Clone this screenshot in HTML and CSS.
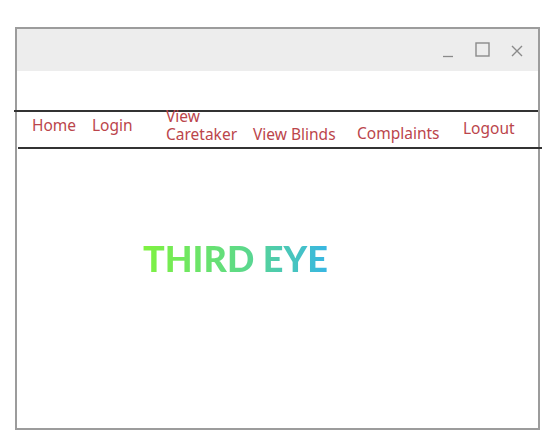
FILE: index.html
```html
<!DOCTYPE html>
<html>
<head>
<meta charset="utf-8">
<link rel="stylesheet" href="styles.css">
</head>
<body>
<div class="window">
  <div class="titlebar">
    <svg class="ctl" width="12" height="14" viewBox="0 0 12 14"><path d="M1 12.5H11" stroke="#8a8a8a" stroke-width="1.3"/></svg>
    <svg class="ctl" width="15" height="15" viewBox="0 0 15 15"><rect x="1" y="1" width="13" height="13" fill="none" stroke="#8a8a8a" stroke-width="1.4"/></svg>
    <svg class="ctl" width="12" height="12" viewBox="0 0 12 12"><path d="M1 1L11 11M11 1L1 11" stroke="#8a8a8a" stroke-width="1.4"/></svg>
  </div>
  <div class="spacer"></div>
  <div class="rule rule-top"></div>
  <nav class="nav">
    <a class="item home">Home</a>
    <a class="item login">Login</a>
    <a class="item caretaker">View<br>Caretaker</a>
    <a class="item blinds">View Blinds</a>
    <a class="item complaints">Complaints</a>
    <a class="item logout">Logout</a>
  </nav>
  <div class="rule rule-bottom"></div>
  <div class="hero"><span class="brand">THIRD EYE</span></div>
</div>
</body>
</html>
```
FILE: styles.css
```css
html, body { margin: 0; padding: 0; background: #fff; }
body { font-family: "Noto Sans", sans-serif; }
.window {
  box-sizing: border-box;
  margin: 27px 0 0 15px;
  width: 525px;
  height: 403px;
  border: 2px solid #9c9c9c;
  background: #fff;
}
.titlebar {
  height: 42px;
  background: #ededed;
  display: flex;
  justify-content: flex-end;
  align-items: center;
  padding-right: 15px;
}
.ctl { display: block; }
.titlebar .ctl:nth-child(1) { margin-right: 21px; margin-top: 2px; }
.titlebar .ctl:nth-child(2) { margin-right: 21px; margin-top: -1px; }
.titlebar .ctl:nth-child(3) { margin-top: 1px; }
.spacer { height: 39px; }
.rule { height: 2px; background: #333; width: 524px; }
.rule-top { margin-left: -3px; }
.rule-bottom { margin-left: 1px; }
.nav {
  height: 35px;
  display: flex;
  align-items: flex-end;
  padding-left: 15px;
}
.item {
  display: block;
  color: #bb454b;
  font-size: 15.5px;
  line-height: 18px;
  flex: none;
}
.home { width: 60px; padding-bottom: 13px; }
.login { width: 74px; padding-bottom: 13px; }
.caretaker { width: 87px; padding-bottom: 4px; }
.blinds { width: 104px; padding-bottom: 4px; }
.complaints { width: 106px; padding-bottom: 5px; }
.logout { padding-bottom: 10px; }
.hero { padding: 90px 0 0 126px; }
.brand {
  display: inline-block;
  font-family: Lato, sans-serif;
  font-weight: 900;
  font-size: 36px;
  line-height: 38px;
  background: linear-gradient(90deg, #7ff240 0%, #5cd98a 55%, #38b6e4 100%);
  -webkit-background-clip: text;
  background-clip: text;
  color: transparent;
}
```
